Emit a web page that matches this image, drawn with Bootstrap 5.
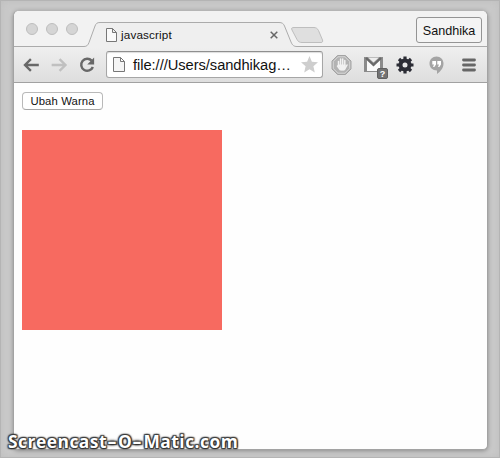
<!DOCTYPE html>
<html lang="id">
<head>
<meta charset="utf-8">
<meta name="viewport" content="width=device-width, initial-scale=1">
<title>javascript</title>
<link href="https://cdn.jsdelivr.net/npm/bootstrap@5.3.0/dist/css/bootstrap.min.css" rel="stylesheet">
<style>
html,body{height:100%}
body{width:500px;height:458px;background:#c9c9c9;font-family:"Liberation Sans",Arial,sans-serif;color:#111;overflow:hidden;padding:10px 12px 8px 13px;box-shadow:inset 0 0 0 1px #b4b4b4, inset 0 0 8px #bdbdbd}
.browser{background:#fefefe;border:1px solid #a3a3a3;border-top-color:#b5b5b5;border-radius:6px 6px 5px 5px;box-shadow:0 1px 4px rgba(0,0,0,.3);overflow:hidden}
.strip{height:36px;background:#f2f2f2}
.strip-shape{position:absolute;left:0;top:0}
.lights{padding-left:12px;gap:8px;width:92px;height:36px}
.light{width:12px;height:12px;border-radius:50%;background:#d5d5d5;border:1px solid #bebebe}
.tab-title{font-size:11.7px;line-height:14px;margin-left:4px;width:149px;letter-spacing:.15px}
.user{border:1px solid #949494;border-radius:3px;background:#f4f4f4;width:66px;height:26px;font-size:12.6px;line-height:26px;margin:6px 5px 0 0;padding:0;text-align:center;color:#111}
.tools{height:36px;background:linear-gradient(#efefef,#dedede);border-bottom:1px solid #a1a1a1}
.nav-icons{width:92px;padding-left:9px}
.address{width:217px;height:27px;border:1px solid #a6a6a6;border-top-color:#8f8f8f;border-radius:3px;background:#fff;padding:0 4px 0 6px;box-shadow:inset 0 1px 1px #ddd}
.url{font-size:14.7px;line-height:25px;margin-left:8px;padding-top:1px;width:159px;letter-spacing:-.05px;white-space:nowrap}
.ext{padding-left:8px}
.content-area{padding:9px 8px}
.change{width:81px;height:18px;border:1px solid #b9b9b9;border-bottom-color:#a6a6a6;border-radius:4px;background:#fff;font-size:11.3px;line-height:16px;padding:0;color:#111;letter-spacing:.12px}
.box{width:200px;height:200px;background:#f76a60;margin-top:20px}
.watermark{position:absolute;left:8px;top:429px;font:700 17.4px/24px "Open Sans","Noto Sans",sans-serif;color:#fff;letter-spacing:.5px;white-space:nowrap;text-shadow:0 0 2px #222,1px 1px 1px #333,-1px -1px 1px #444,1px -1px 1px #444,-1px 1px 1px #444,0 0 3px #333}
.dash{display:inline-block;width:11px;text-align:center;transform:scaleX(1.6)}
</style>
<script src="https://cdn.jsdelivr.net/npm/bootstrap@5.3.0/dist/js/bootstrap.bundle.min.js"></script>
</head>
<body>
<div class="browser h-100">
  <div class="strip position-relative">
    <svg class="strip-shape" width="473" height="36" viewBox="0 0 473 36">
      <path d="M0 35.500H70C73 35.500 74 34 75 31.500L81 15C82 12.500 83 11.500 86 11.500H265C268 11.500 269.500 12.500 270.500 15L277 31C278.500 34.500 280 35.500 283 35.500H473V37H0Z" fill="#efefef" stroke="#ababab"/>
      <path d="M280 16.500H300C302 16.500 303.500 17.500 304.500 19.500L308.500 29C309 30.500 308.500 31.500 307 31.500H288C285.500 31.500 284 30.500 283 28.500L278 19C277 17 278 16.500 280 16.500Z" fill="#dfdfdf" stroke="#bebebe"/>
    </svg>
    <div class="d-flex position-relative h-100">
      <div class="lights d-flex align-items-center"><span class="light"></span><span class="light"></span><span class="light"></span></div>
      <div class="d-flex align-items-center pt-2 mt-1">
        <svg width="11" height="14" viewBox="0 0 11 14"><path d="M.5.500H6.500L10.500 4.500V13.500H.5ZM6.500.500V4.500H10.500" fill="#fafafa" stroke="#777"/></svg>
        <span class="tab-title">javascript</span>
        <svg width="8" height="8" viewBox="0 0 8 8"><path d="M.7.700L7.300 7.300M7.300.700L.7 7.300" stroke="#676767" stroke-width="1.500"/></svg>
      </div>
      <button class="btn user ms-auto">Sandhika</button>
    </div>
  </div>
  <div class="tools d-flex align-items-center">
    <div class="nav-icons d-flex align-items-center">
      <svg width="84" height="18" viewBox="0 0 84 18" fill="none">
        <path d="M16 9H2.500M8 3L2 9L8 15" stroke="#686868" stroke-width="2.400"/>
        <path d="M29 9H42.500M37 3L43 9L37 15" stroke="#c0c0c0" stroke-width="2.400"/>
        <path d="M69.500 4.600A6.100 6.100 0 1 0 70.700 11" stroke="#686868" stroke-width="2.500"/><path d="M72 1.500V8.500H65Z" fill="#686868"/>
      </svg>
    </div>
    <div class="address d-flex align-items-center">
      <svg width="12" height="15" viewBox="0 0 12 15"><path d="M.5.500H7.500L11.500 4.500V14.500H.5ZM7.500.500V4.500H11.500" fill="#f5f5f5" stroke="#777"/></svg>
      <span class="url">file:///Users/sandhikag…</span>
      <svg class="ms-auto flex-shrink-0" width="17" height="17" viewBox="0 0 17 17"><path d="M8.500 0L10.900 5.800L17 6.300L12.400 10.300L13.800 16.500L8.500 13.200L3.200 16.500L4.600 10.300L0 6.300L6.100 5.800Z" fill="#cecece"/></svg>
    </div>
    <div class="ext d-flex">
      <svg width="150" height="28" viewBox="0 0 150 28">
        <path d="M6.500 4.500H14.500L20 10V18L14.500 23.500H6.500L1 18V10Z" fill="#b3b3b3" stroke="#a3a3a3"/>
        <path d="M7 5.800H14L18.700 10.500V17.500L14 22.200H7L2.300 17.500V10.500Z" fill="none" stroke="#dedede" stroke-width=".8"/>
        <path d="M7.500 15V10.500M9.600 14V8M11.700 14V8M13.800 15V9.500M6.500 15L9 18.500H13.500L16 14" fill="none" stroke="#f2f2f2" stroke-width="1.500" stroke-linecap="round"/><path d="M7 13.500H14.500V17L13 19.500H9.500Z" fill="#f2f2f2"/>
        <path d="M33 6H52V21H33Z" fill="#8b8b8b"/><path d="M36 8L42.500 13.500L49 8V20H36Z" fill="#fafafa"/><path d="M35 7L42.500 14L50 7" fill="none" stroke="#696969" stroke-width="2.200"/><path d="M37 6.500H48L42.500 11.500Z" fill="#ededed"/>
        <rect x="46.500" y="17.500" width="10" height="10" rx="1.500" fill="#737373" stroke="#606060"/>
        <text x="51.500" y="26" font-size="9" font-weight="700" text-anchor="middle" fill="#fff" font-family="Liberation Sans">?</text>
        <circle cx="74" cy="14" r="4.500" fill="none" stroke="#2b2c35" stroke-width="4"/>
        <path d="M74 5.500V9M74 19V22.500M65.500 14H69M79 14H82.500M68 8L70.500 10.500M77.500 17.500L80 20M68 20L70.500 17.500M77.500 10.500L80 8" stroke="#2b2c35" stroke-width="3.200"/>
        <path d="M105.500 5.500C109.500 5.500 112.500 8.500 112.500 12.500C112.500 17 109.500 20.500 106 23V19.500C101.500 19.500 98.500 16.500 98.500 12.500C98.500 8.500 101.500 5.500 105.500 5.500Z" fill="#a4a4a4"/>
        <path d="M101.300 10H105V13.500L103.300 16H102L103 13.500H101.300ZM106.300 10H110V13.500L108.300 16H107L108 13.500H106.300Z" fill="#fff"/>
        <path d="M132.500 9H143.500M132.500 14H143.500M132.500 19H143.500" stroke="#666" stroke-width="2.800" stroke-linecap="round"/>
      </svg>
    </div>
  </div>
  <main class="content-area">
    <button class="btn change d-block">Ubah Warna</button>
    <div class="box"></div>
  </main>
</div>
<div class="watermark">Screencast<span class="dash">-</span>O<span class="dash">-</span>Matic.com</div>
</body>
</html>
